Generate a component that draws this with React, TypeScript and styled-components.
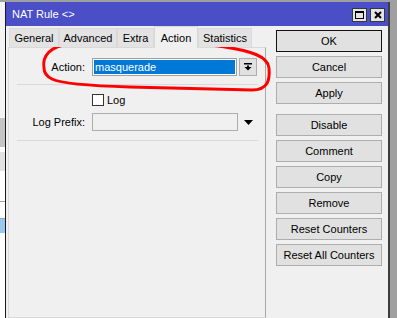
import React from "react";
import styled, { createGlobalStyle } from "styled-components";

const GlobalStyle = createGlobalStyle`
  html, body { margin: 0; padding: 0; }
  body {
    background: #a0a0a0;
    font-family: "Liberation Sans", Arial, sans-serif;
    font-size: 11px;
    color: #000;
    overflow: hidden;
  }
`;

const Root = styled.div`
  position: relative;
  width: 397px;
  height: 318px;
  display: flex;
  overflow: hidden;
`;

const LeftStrip = styled.div`
  width: 5px;
  flex-shrink: 0;
  display: flex;
  flex-direction: column;
`;

const StripPart = styled.div<{ $h?: number; $c: string }>`
  height: ${(p) => (p.$h ? `${p.$h}px` : "auto")};
  flex: ${(p) => (p.$h ? "0 0 auto" : "1")};
  background: ${(p) => p.$c};
`;

const Window = styled.div`
  margin-top: 2px;
  width: 385px;
  height: 316px;
  box-sizing: border-box;
  border-left: 1px solid #1a1a1a;
  border-right: 2px solid #3d3d3d;
  display: flex;
  flex-direction: column;
  background: #f0f0f0;
  flex-shrink: 0;
`;

const TitleBar = styled.div`
  height: 24px;
  flex-shrink: 0;
  background: #4a4fc8;
  display: flex;
  align-items: center;
  padding: 0 3px 0 6px;
  color: #fff;
`;

const Title = styled.div`
  flex: 1;
  font-size: 11px;
`;

const TitleButtons = styled.div`
  display: flex;
  gap: 3px;
  margin-top: 2px;
`;

const TitleButton = styled.div`
  width: 15px;
  height: 14px;
  box-sizing: border-box;
  border: 1px solid #383838;
  background: #e4e4e4;
  display: flex;
  align-items: center;
  justify-content: center;
`;

const Body = styled.div`
  flex: 1;
  display: flex;
  padding-left: 2px;
`;

const Main = styled.div`
  width: 258px;
  display: flex;
  flex-direction: column;
`;

const TabRow = styled.div`
  height: 21px;
  display: flex;
  align-items: flex-end;
  padding-left: 1px;
`;

const Tab = styled.div<{ $w: number; $active?: boolean }>`
  position: relative;
  z-index: ${(p) => (p.$active ? 2 : 1)};
  width: ${(p) => p.$w}px;
  height: ${(p) => (p.$active ? 22 : 19)}px;
  margin-bottom: ${(p) => (p.$active ? -1 : 0)}px;
  box-sizing: border-box;
  border: 1px solid #d9d9d9;
  border-bottom: none;
  background: ${(p) => (p.$active ? "#f0f0f0" : "#e3e3e3")};
  display: flex;
  align-items: center;
  justify-content: center;
`;

const Panel = styled.div`
  flex: 1;
  border: 1px solid #d9d9d9;
  border-right-color: #a8a8a8;
  padding-top: 10px;
  display: flex;
  flex-direction: column;
`;

const Row = styled.div<{ $mt?: number; $h: number }>`
  display: flex;
  align-items: center;
  height: ${(p) => p.$h}px;
  margin-top: ${(p) => p.$mt ?? 0}px;
`;

const Label = styled.div`
  width: 76px;
  margin-right: 7px;
  text-align: right;
  flex-shrink: 0;
`;

const SelectBox = styled.div`
  width: 145px;
  height: 18px;
  box-sizing: border-box;
  border: 1px solid #a0a0a0;
  background: #fff;
  padding: 1px;
  display: flex;
`;

const Selected = styled.div`
  flex: 1;
  background: #0078d7;
  color: #fff;
  padding-left: 1px;
  display: flex;
  align-items: center;
`;

const DropButton = styled.div`
  width: 18px;
  height: 18px;
  margin-left: 2px;
  box-sizing: border-box;
  border: 1px solid #adadad;
  background: #e1e1e1;
  display: flex;
  align-items: center;
  justify-content: center;
`;

const Separator = styled.div<{ $mt: number }>`
  margin: ${(p) => p.$mt}px 7px 0 8px;
  height: 1px;
  background: #d9d9d9;
`;

const Checkbox = styled.div`
  width: 12px;
  height: 12px;
  box-sizing: border-box;
  border: 1px solid #333;
  background: #fff;
  margin-right: 3px;
`;

const DisabledInput = styled.div`
  width: 146px;
  height: 18px;
  box-sizing: border-box;
  border: 1px solid #adadad;
  background: #f0f0f0;
`;

const ArrowWrap = styled.div`
  margin-left: 6px;
  display: flex;
`;

const ButtonColumn = styled.div`
  width: 106px;
  margin-left: 10px;
  padding-top: 4px;
  display: flex;
  flex-direction: column;
  gap: 4px;
`;

const Button = styled.div<{ $default?: boolean; $spaced?: boolean }>`
  height: 22px;
  box-sizing: border-box;
  border: 1px solid ${(p) => (p.$default ? "#111" : "#adadad")};
  background: #e1e1e1;
  margin-top: ${(p) => (p.$spaced ? 6 : 0)}px;
  display: flex;
  align-items: center;
  justify-content: center;
`;

const Annotation = styled.svg`
  position: absolute;
  left: 0;
  top: 0;
  pointer-events: none;
`;

const tabs: { name: string; w: number; active?: boolean }[] = [
  { name: "General", w: 50 },
  { name: "Advanced", w: 58 },
  { name: "Extra", w: 37 },
  { name: "Action", w: 44, active: true },
  { name: "Statistics", w: 54 },
];

const buttons: { label: string; def?: boolean; spaced?: boolean }[] = [
  { label: "OK", def: true },
  { label: "Cancel" },
  { label: "Apply" },
  { label: "Disable", spaced: true },
  { label: "Comment" },
  { label: "Copy" },
  { label: "Remove" },
  { label: "Reset Counters" },
  { label: "Reset All Counters" },
];

export default function App() {
  return (
    <Root>
      <GlobalStyle />
      <LeftStrip>
        <StripPart $h={2} $c="#a0a0a0" />
        <StripPart $h={116} $c="#f4f4f4" />
        <StripPart $h={29} $c="#c4c4c4" />
        <StripPart $h={5} $c="#ffffff" />
        <StripPart $h={19} $c="#e2e2e2" />
        <StripPart $h={30} $c="#ffffff" />
        <StripPart $h={1} $c="#a0a0a0" />
        <StripPart $h={16} $c="#ffffff" />
        <StripPart $h={1} $c="#a0a0a0" />
        <StripPart $h={14} $c="#99c9ef" />
        <StripPart $c="#ffffff" />
      </LeftStrip>
      <Window>
        <TitleBar>
          <Title>NAT Rule &lt;&gt;</Title>
          <TitleButtons>
            <TitleButton>
              <svg width="9" height="8" viewBox="0 0 9 8">
                <rect x="0.5" y="0.5" width="8" height="7" fill="none" stroke="#000" strokeWidth="1" />
                <rect x="0" y="0" width="9" height="2" fill="#000" />
              </svg>
            </TitleButton>
            <TitleButton>
              <svg width="8" height="8" viewBox="0 0 8 8">
                <path d="M1 1 L7 7 M7 1 L1 7" stroke="#000" strokeWidth="2" />
              </svg>
            </TitleButton>
          </TitleButtons>
        </TitleBar>
        <Body>
          <Main>
            <TabRow>
              {tabs.map((t) => (
                <Tab key={t.name} $w={t.w} $active={t.active}>
                  {t.name}
                </Tab>
              ))}
            </TabRow>
            <Panel>
              <Row $h={18}>
                <Label>Action:</Label>
                <SelectBox>
                  <Selected>masquerade</Selected>
                </SelectBox>
                <DropButton>
                  <svg width="8" height="8" viewBox="0 0 8 8">
                    <rect x="0" y="0" width="8" height="1.5" fill="#000" />
                    <polygon points="3,2.5 5,2.5 5,4 7.5,4 4,7.5 0.5,4 3,4" fill="#000" />
                  </svg>
                </DropButton>
              </Row>
              <Separator $mt={8} />
              <Row $h={12} $mt={9}>
                <Label />
                <Checkbox />
                <span>Log</span>
              </Row>
              <Row $h={18} $mt={7}>
                <Label>Log Prefix:</Label>
                <DisabledInput />
                <ArrowWrap>
                  <svg width="9" height="5" viewBox="0 0 9 5">
                    <polygon points="0,0 9,0 4.5,5" fill="#000" />
                  </svg>
                </ArrowWrap>
              </Row>
              <Separator $mt={9} />
            </Panel>
          </Main>
          <ButtonColumn>
            {buttons.map((b) => (
              <Button key={b.label} $default={b.def} $spaced={b.spaced}>
                {b.label}
              </Button>
            ))}
          </ButtonColumn>
        </Body>
      </Window>
      <Annotation width="397" height="318" viewBox="0 0 397 318">
        <path
          d="M 44 68 C 42 56, 50 46, 70 44 C 110 41, 180 41, 225 47 C 250 51, 268 56, 269 68 C 270 80, 268 90, 252 90 L 130 87 C 95 86, 62 84, 52 79 C 46 76, 44 72, 44 68"
          fill="none"
          stroke="#ff0000"
          strokeWidth="3"
          strokeLinecap="round"
        />
      </Annotation>
    </Root>
  );
}
